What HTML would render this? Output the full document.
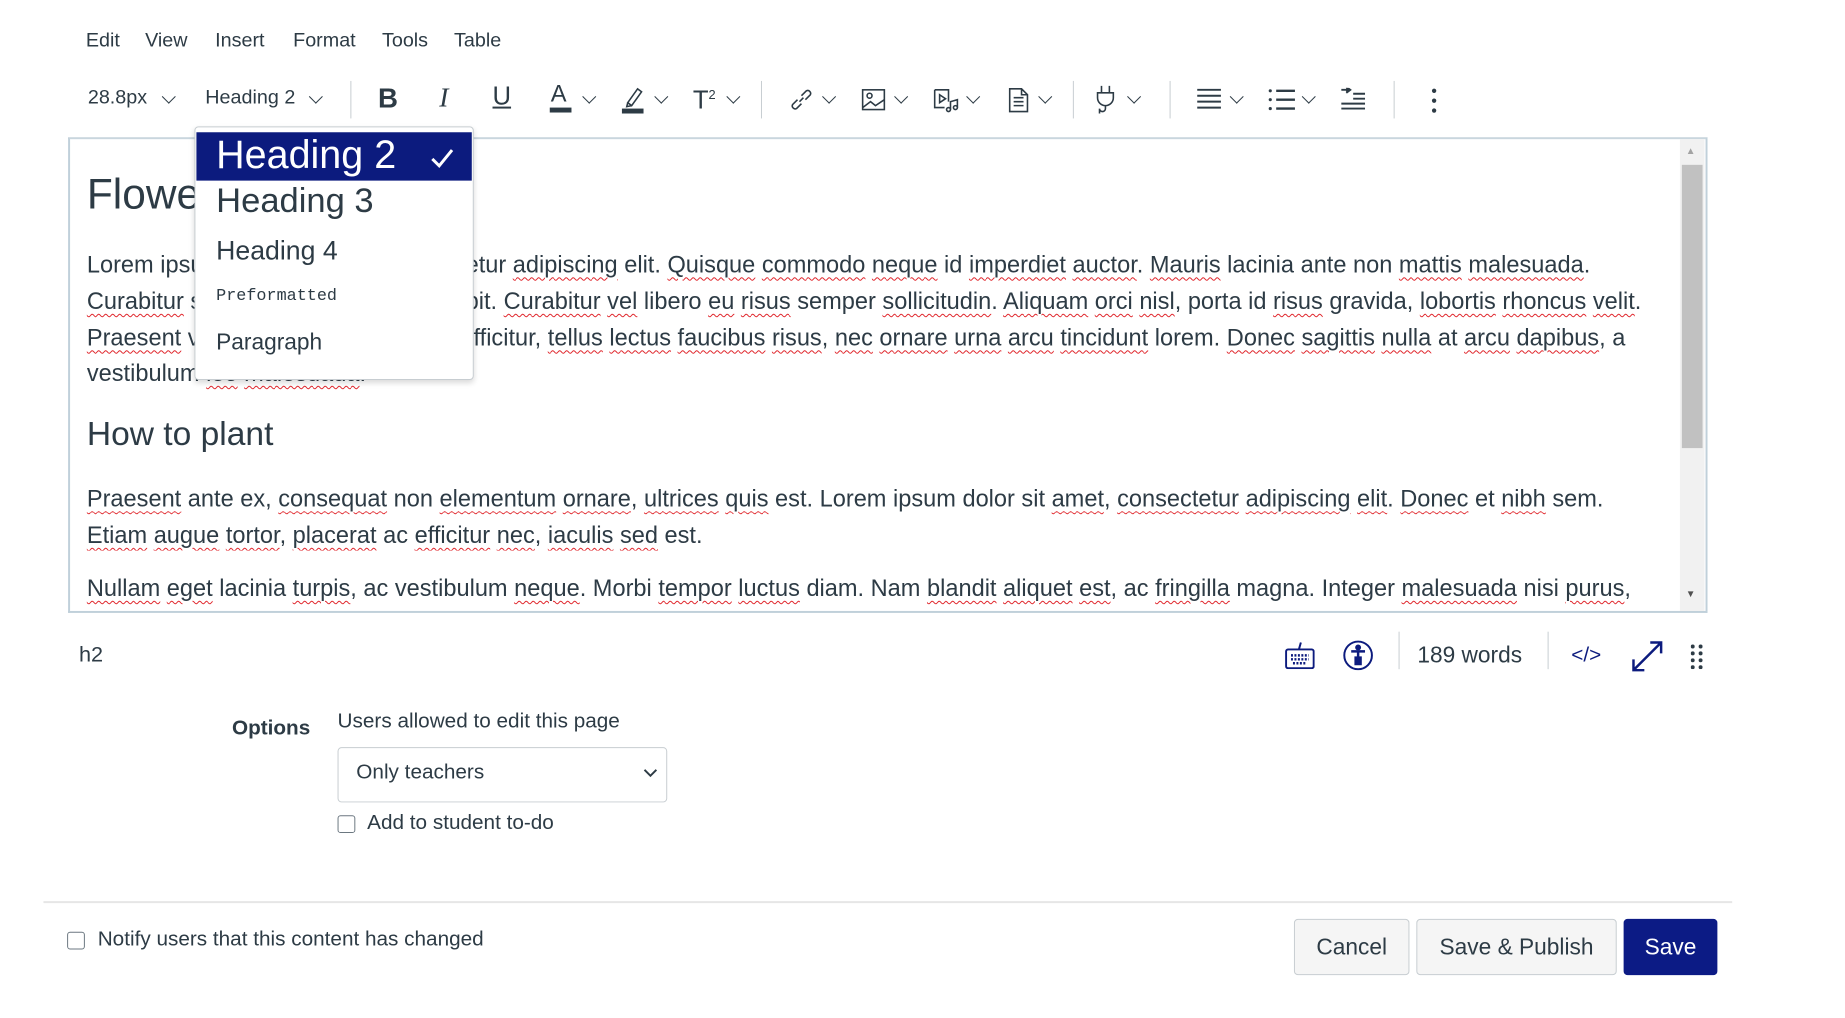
<!DOCTYPE html>
<html><head><meta charset="utf-8"><style>
*{margin:0;padding:0;box-sizing:border-box}
body{width:1845px;height:1018px;background:#fff;font-family:"Liberation Sans",sans-serif;color:#2d3b45;position:relative;overflow:hidden}
#w{position:absolute;left:0;top:0;width:1845px;height:1018px;transform:scale(0.987);transform-origin:0 0}
.a{position:absolute;white-space:nowrap}
.menu{font-size:20px;top:30px}
.tb{top:88px;font-size:20px}
.chev{position:absolute;top:93px;width:10px;height:10px;border-right:1.6px solid #2d3b45;border-bottom:1.6px solid #2d3b45;transform:rotate(45deg)}
.div{position:absolute;top:82px;width:1px;height:38px;background:#c7cdd1}
.ed{position:absolute;left:69px;top:139px;width:1661px;height:482px;border:2px solid #c0d0da;border-top-color:#c9d6de}
.p{font-size:23.9px;line-height:37px}
.s{text-decoration:underline wavy #e0262c;text-decoration-thickness:1px;text-underline-offset:4px}
.dd{position:absolute;left:197px;top:128px;width:283px;height:257px;background:#fff;border:1px solid #c7cdd1;border-radius:4px;box-shadow:0 3px 6px rgba(0,0,0,.15)}
.btn{position:absolute;top:931px;height:57px;background:#f5f5f5;border:1px solid #c7cdd1;border-radius:4px;font-size:23px;display:flex;align-items:center;justify-content:center;color:#2d3b45}
.cb{position:absolute;width:18px;height:18px;border:1.5px solid #6b7780;border-radius:3px;background:#fff}
svg{position:absolute}
</style></head><body><div id="w">
<div class="a menu" style="left:87px">Edit</div>
<div class="a menu" style="left:147px">View</div>
<div class="a menu" style="left:218px">Insert</div>
<div class="a menu" style="left:297px">Format</div>
<div class="a menu" style="left:387px">Tools</div>
<div class="a menu" style="left:460px">Table</div>

<div class="a tb" style="left:89px">28.8px</div><div class="chev" style="left:166px"></div>
<div class="a tb" style="left:208px">Heading 2</div><div class="chev" style="left:315px"></div>
<div class="div" style="left:355px"></div>
<div class="a" style="left:383px;top:84px;font-size:28px;font-weight:bold">B</div>
<div class="a" style="left:445px;top:84px;font-size:28px;font-style:italic;font-family:'Liberation Serif',serif">I</div>
<div class="a" style="left:499px;top:82px;font-size:26px;text-decoration:underline">U</div>
<div class="a" style="left:558px;top:82px;font-size:24px">A</div><div class="a" style="left:557px;top:109px;width:22px;height:5px;background:#2d3b45"></div><div class="chev" style="left:592px"></div>
<svg style="left:630px;top:86px" width="24" height="30" viewBox="0 0 24 30"><path d="M6 18 L16 4 L20 7 L10 21 Z M6 18 L5 22 L10 21" fill="none" stroke="#2d3b45" stroke-width="1.6"/><rect x="0" y="24" width="22" height="5" fill="#2d3b45"/></svg><div class="chev" style="left:665px"></div>
<div class="a" style="left:702px;top:86px;font-size:26px">T<sup style="font-size:13px">2</sup></div><div class="chev" style="left:738px"></div>
<div class="div" style="left:771px"></div>
<svg style="left:799px;top:88px" width="26" height="26" viewBox="0 0 26 26" fill="none" stroke="#2d3b45" stroke-width="1.6"><path d="M11 15 L15 11 M9 13 L4 18 A3 3 0 0 0 8 22 L13 17 M17 13 L22 8 A3 3 0 0 0 18 4 L13 9"/></svg><div class="chev" style="left:835px"></div>
<svg style="left:872px;top:89px" width="26" height="24" viewBox="0 0 26 24" fill="none" stroke="#2d3b45" stroke-width="1.6"><rect x="2" y="2" width="22" height="20"/><circle cx="9" cy="8" r="2.5"/><path d="M2 20 L10 14 L15 18 L24 12"/></svg><div class="chev" style="left:908px"></div>
<svg style="left:945px;top:89px" width="28" height="26" viewBox="0 0 28 26" fill="none" stroke="#2d3b45" stroke-width="1.6"><path d="M2 2 H16 V14 M2 2 V20 H12 M7 7 L13 11 L7 15 Z"/><path d="M18 22 V14 L25 12 V20"/><circle cx="16" cy="22" r="2"/><circle cx="23" cy="20" r="2"/></svg><div class="chev" style="left:981px"></div>
<svg style="left:1021px;top:88px" width="22" height="27" viewBox="0 0 22 27" fill="none" stroke="#2d3b45" stroke-width="1.6"><path d="M2 2 H14 L20 8 V25 H2 Z M14 2 V8 H20 M6 11 H16 M6 15 H16 M6 19 H16"/></svg><div class="chev" style="left:1054px"></div>
<div class="div" style="left:1087px"></div>
<svg style="left:1108px;top:86px" width="24" height="30" viewBox="0 0 24 30" fill="none" stroke="#2d3b45" stroke-width="1.6"><path d="M8 1 V8 M16 1 V8 M4 8 H20 V13 A8 8 0 0 1 4 13 Z M12 21 V24 A3 3 0 0 1 6 24 V29"/></svg><div class="chev" style="left:1144px"></div>
<div class="div" style="left:1185px"></div>
<svg style="left:1212px;top:89px" width="26" height="24" viewBox="0 0 26 24" stroke="#2d3b45" stroke-width="2"><path d="M1 2 H25 M1 8 H25 M1 14 H25 M1 20 H25"/></svg><div class="chev" style="left:1248px"></div>
<svg style="left:1285px;top:89px" width="28" height="24" viewBox="0 0 28 24" stroke="#2d3b45" stroke-width="2.4"><path d="M8 3 H27 M8 12 H27 M8 21 H27"/><circle cx="2" cy="3" r="1.6" fill="#2d3b45" stroke="none"/><circle cx="2" cy="12" r="1.6" fill="#2d3b45" stroke="none"/><circle cx="2" cy="21" r="1.6" fill="#2d3b45" stroke="none"/></svg><div class="chev" style="left:1321px"></div>
<svg style="left:1358px;top:89px" width="26" height="24" viewBox="0 0 26 24" stroke="#2d3b45" stroke-width="2"><path d="M1 2 H10 M6 -1 L10 2 L6 5 M13 6 H25 M13 11 H25 M1 16 H25 M1 21 H25"/></svg>
<div class="div" style="left:1412px"></div>
<svg style="left:1450px;top:89px" width="6" height="26"><circle cx="3" cy="3" r="2.2" fill="#2d3b45"/><circle cx="3" cy="13" r="2.2" fill="#2d3b45"/><circle cx="3" cy="23" r="2.2" fill="#2d3b45"/></svg>

<div class="ed"></div>
<div class="a" style="left:1702px;top:141px;width:25px;height:478px;background:#f1f1f1"></div>
<div class="a" style="left:1704px;top:167px;width:21px;height:287px;background:#c1c1c1"></div>
<div class="a" style="left:1708px;top:148px;font-size:10px;color:#a3a3a3">▲</div>
<div class="a" style="left:1708px;top:597px;font-size:10px;color:#505050">▼</div>

<div class="a" style="left:88px;top:173px;font-size:43px">Flowers</div>
<div class="a p" style="left:88px;top:250px">Lorem ipsum dolor sit amet, consectetur <span class="s">adipiscing</span> elit. <span class="s">Quisque</span> <span class="s">commodo</span> <span class="s">neque</span> id <span class="s">imperdiet</span> <span class="s">auctor</span>. <span class="s">Mauris</span> lacinia ante non <span class="s">mattis</span> <span class="s">malesuada</span>.</div>
<div class="a p" style="left:88px;top:287px"><span class="s">Curabitur</span> sit amet nisi in purus suscipit. <span class="s">Curabitur</span> <span class="s">vel</span> libero <span class="s">eu</span> <span class="s">risus</span> semper <span class="s">sollicitudin</span>. <span class="s">Aliquam</span> <span class="s">orci</span> <span class="s">nisl</span>, porta id <span class="s">risus</span> gravida, <span class="s">lobortis</span> <span class="s">rhoncus</span> <span class="s">velit</span>.</div>
<div class="a p" style="left:88px;top:324px"><span class="s">Praesent</span> vel nisl nec urna tristique, efficitur, <span class="s">tellus</span> <span class="s">lectus</span> <span class="s">faucibus</span> <span class="s">risus</span>, <span class="s">nec</span> <span class="s">ornare</span> <span class="s">urna</span> <span class="s">arcu</span> <span class="s">tincidunt</span> lorem. <span class="s">Donec</span> <span class="s">sagittis</span> <span class="s">nulla</span> at <span class="s">arcu</span> <span class="s">dapibus</span>, a</div>
<div class="a p" style="left:88px;top:360px">vestibulum <span class="s">leo</span> <span class="s">malesuada</span>.</div>
<div class="a" style="left:88px;top:421px;font-size:34px">How to plant</div>
<div class="a p" style="left:88px;top:487px"><span class="s">Praesent</span> ante ex, <span class="s">consequat</span> non <span class="s">elementum</span> <span class="s">ornare</span>, <span class="s">ultrices</span> <span class="s">quis</span> est. Lorem ipsum dolor sit <span class="s">amet</span>, <span class="s">consectetur</span> <span class="s">adipiscing</span> <span class="s">elit</span>. <span class="s">Donec</span> et <span class="s">nibh</span> sem.</div>
<div class="a p" style="left:88px;top:524px"><span class="s">Etiam</span> <span class="s">augue</span> <span class="s">tortor</span>, <span class="s">placerat</span> ac <span class="s">efficitur</span> <span class="s">nec</span>, <span class="s">iaculis</span> <span class="s">sed</span> est.</div>
<div class="a p" style="left:88px;top:578px"><span class="s">Nullam</span> <span class="s">eget</span> lacinia <span class="s">turpis</span>, ac vestibulum <span class="s">neque</span>. Morbi <span class="s">tempor</span> <span class="s">luctus</span> diam. Nam <span class="s">blandit</span> <span class="s">aliquet</span> <span class="s">est</span>, ac <span class="s">fringilla</span> magna. Integer <span class="s">malesuada</span> nisi <span class="s">purus</span>,</div>

<div class="dd">
 <div class="a" style="left:1px;top:5px;width:279px;height:49px;background:#0c1b7e"></div>
 <div class="a" style="left:21px;top:6px;font-size:40px;color:#fff">Heading 2</div>
 <svg style="left:238px;top:20px" width="24" height="22"><path d="M2 12 L9 19 L22 3" fill="none" stroke="#fff" stroke-width="3"/></svg>
 <div class="a" style="left:21px;top:55px;font-size:35px">Heading 3</div>
 <div class="a" style="left:21px;top:110px;font-size:27px">Heading 4</div>
 <div class="a" style="left:21px;top:162px;font-size:17px;font-family:'Liberation Mono',monospace">Preformatted</div>
 <div class="a" style="left:21px;top:204px;font-size:23px">Paragraph</div>
</div>

<div class="a" style="left:80px;top:650px;font-size:22px">h2</div>
<svg style="left:1302px;top:650px" width="30" height="28" viewBox="0 0 30 28" fill="none" stroke="#0c1b7e" stroke-width="2"><path d="M16 1 L14 8"/><rect x="1" y="8" width="28" height="19" rx="2"/><path d="M6 14 H24 M6 18 H24 M8 22 H22" stroke-dasharray="2 1.5" stroke-width="2.5"/></svg>
<svg style="left:1360px;top:648px" width="32" height="32" viewBox="0 0 32 32" fill="none" stroke="#0c1b7e" stroke-width="2"><circle cx="16" cy="16" r="14"/><circle cx="16" cy="8" r="2" fill="#0c1b7e"/><path d="M9 12 H23 M16 12 V26 M13.5 17 V26 M18.5 17 V26" stroke-width="2.5"/></svg>
<div class="a" style="left:1417px;top:640px;width:1px;height:38px;background:#c7cdd1"></div>
<div class="a" style="left:1436px;top:650px;font-size:23px">189 words</div>
<div class="a" style="left:1568px;top:640px;width:1px;height:38px;background:#c7cdd1"></div>
<div class="a" style="left:1592px;top:652px;font-size:21px;color:#0c1b7e">&lt;/&gt;</div>
<svg style="left:1652px;top:648px" width="34" height="34" viewBox="0 0 34 34" fill="none" stroke="#0c1b7e" stroke-width="2.5"><path d="M3 31 L31 3 M20 3 H31 V14 M3 20 V31 H14"/></svg>
<svg style="left:1713px;top:652px" width="12" height="26"><g fill="#2d3b45"><circle cx="2" cy="3" r="2"/><circle cx="10" cy="3" r="2"/><circle cx="2" cy="10" r="2"/><circle cx="10" cy="10" r="2"/><circle cx="2" cy="17" r="2"/><circle cx="10" cy="17" r="2"/><circle cx="2" cy="24" r="2"/><circle cx="10" cy="24" r="2"/></g></svg>

<div class="a" style="left:235px;top:726px;font-size:21px;font-weight:bold">Options</div>
<div class="a" style="left:342px;top:719px;font-size:21px">Users allowed to edit this page</div>
<div class="a" style="left:342px;top:757px;width:334px;height:56px;border:1px solid #c7cdd1;border-radius:4px"></div>
<div class="a" style="left:361px;top:771px;font-size:21px">Only teachers</div>
<svg style="left:652px;top:778px" width="14" height="10"><path d="M1 2 L7 8 L13 2" fill="none" stroke="#2d3b45" stroke-width="2"/></svg>
<div class="cb" style="left:342px;top:826px"></div>
<div class="a" style="left:372px;top:822px;font-size:21px">Add to student to-do</div>

<div class="a" style="left:44px;top:913px;width:1711px;height:2px;background:#e6e6e6"></div>
<div class="cb" style="left:68px;top:944px"></div>
<div class="a" style="left:99px;top:940px;font-size:21px">Notify users that this content has changed</div>
<div class="btn" style="left:1311px;width:117px">Cancel</div>
<div class="btn" style="left:1435px;width:203px">Save &amp; Publish</div>
<div class="btn" style="left:1645px;width:95px;background:#0c1b85;border-color:#0c1b85;color:#fff">Save</div>
</div></body></html>
